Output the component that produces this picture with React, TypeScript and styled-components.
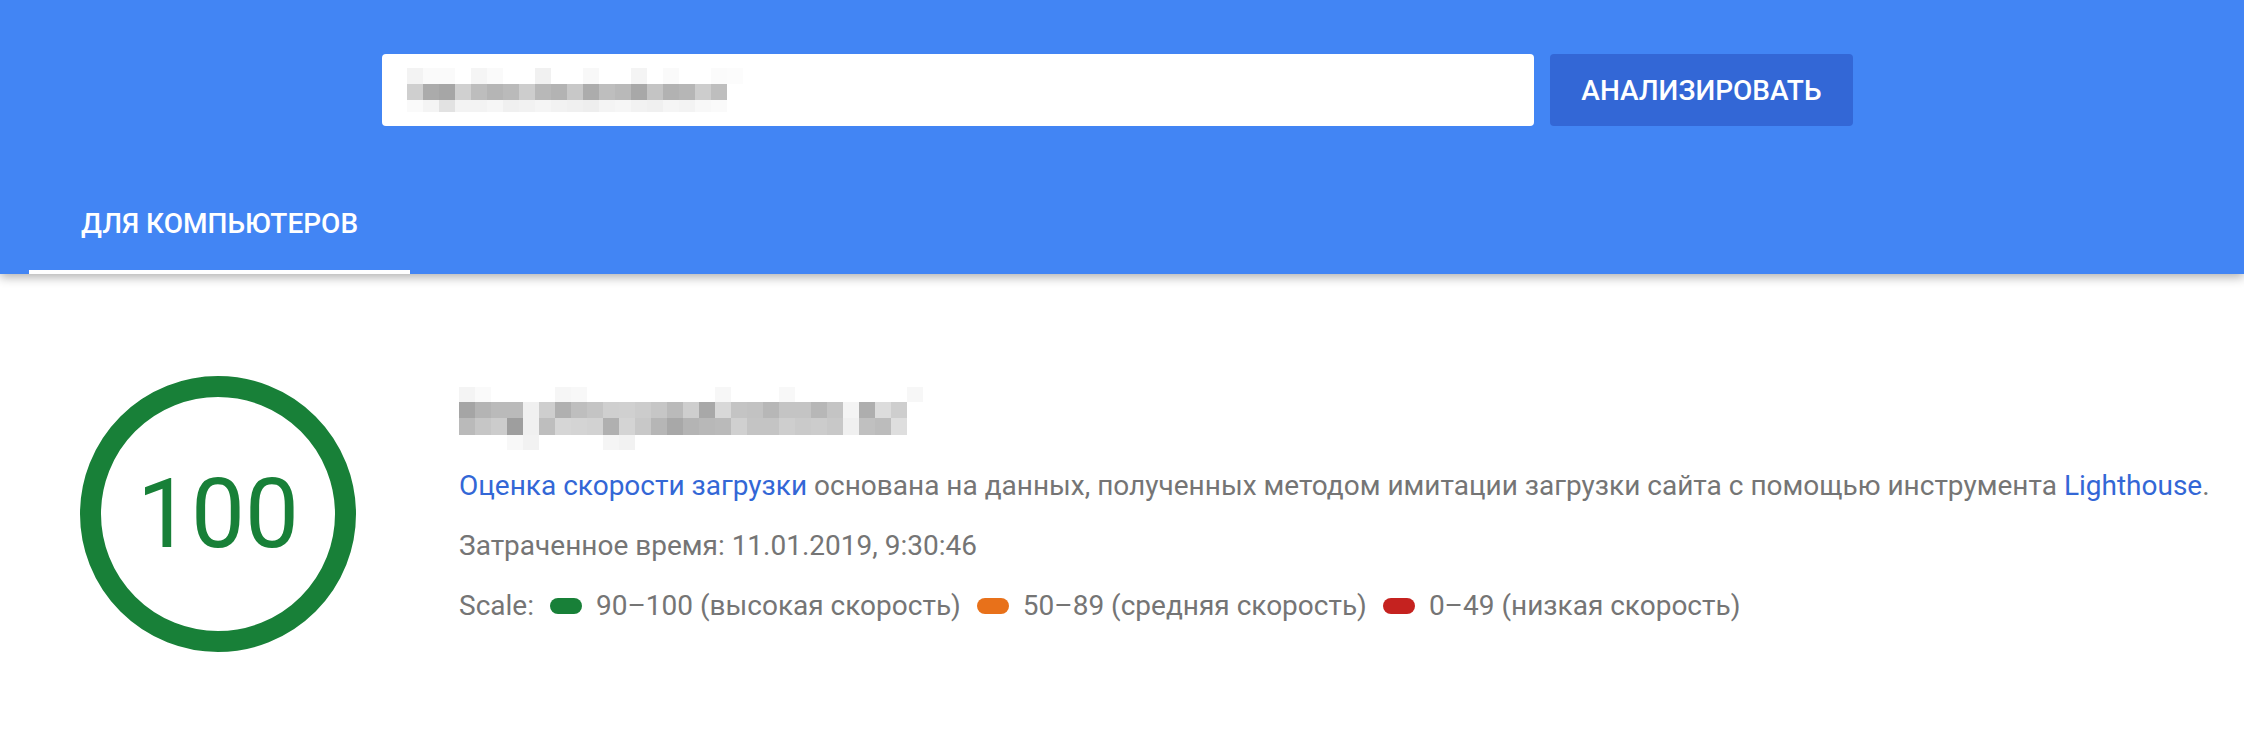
import styled, { createGlobalStyle } from "styled-components"

const GlobalStyle = createGlobalStyle`
  html, body {
    margin: 0;
    padding: 0;
    background: #fff;
  }
  body {
    font-family: Roboto, "Liberation Sans", Arial, sans-serif;
  }
`

const Header = styled.header`
  position: relative;
  z-index: 2;
  background: #4285f4;
  box-shadow: 0 3px 10px rgba(0, 0, 0, 0.32);
`

const SearchRow = styled.div`
  display: flex;
  justify-content: center;
  gap: 16px;
  padding: 54px 9px 0 0;
`

const UrlField = styled.div`
  display: flex;
  align-items: center;
  box-sizing: border-box;
  width: 1152px;
  height: 72px;
  padding-left: 25px;
  background: #fff;
  border-radius: 4px;
`

const AnalyzeBtn = styled.button`
  width: 303px;
  height: 72px;
  border: none;
  border-radius: 4px;
  background: #3367d6;
  color: #fff;
  font-family: Roboto, "Liberation Sans", Arial, sans-serif;
  font-size: 28px;
  font-weight: 500;
  cursor: pointer;
`

const Tabs = styled.nav`
  display: flex;
  padding: 50px 0 0 29px;
`

const Tab = styled.div<{ active?: boolean }>`
  display: flex;
  align-items: center;
  box-sizing: border-box;
  height: 98px;
  padding: 0 52px;
  color: #fff;
  font-size: 28px;
  font-weight: 500;
  border-bottom: 4px solid ${({ active }) => (active ? "#fff" : "transparent")};
`

const Mosaic = styled.div`
  display: flex;
  flex-direction: column;
`

const MosaicRow = styled.div<{ h: number }>`
  display: flex;
  height: ${({ h }) => h}px;
`

const MosaicCell = styled.span<{ shade: number }>`
  width: 16px;
  height: 100%;
  background: ${({ shade }) => `rgb(${shade}, ${shade}, ${shade})`};
`

const Main = styled.main`
  display: flex;
  padding: 102px 0 0 80px;
`

const Gauge = styled.div`
  position: relative;
  flex: none;
  width: 276px;
  height: 276px;
  display: flex;
  align-items: center;
  justify-content: center;

  svg {
    position: absolute;
    inset: 0;
  }
`

const Score = styled.span`
  position: relative;
  font-size: 96px;
  color: #188038;
  line-height: 1;
`

const Summary = styled.section`
  margin-left: 103px;
  padding-top: 11px;
  color: #757575;
  font-size: 28px;
`

const Line = styled.p`
  margin: 0;
  line-height: 60px;
  white-space: nowrap;
`

const FirstLine = styled(Line)`
  margin-top: 6px;
`

const Link = styled.a`
  color: #3367d6;
  text-decoration: none;
`

const ScaleLine = styled(Line)`
  display: flex;
  align-items: center;
`

const Pill = styled.span<{ color: string }>`
  display: inline-block;
  width: 32px;
  height: 16px;
  margin: 0 14px 0 16px;
  border-radius: 8px;
  background: ${({ color }) => color};
`

const inputMosaic = [
  { h: 16, cells: [243, 250, 250, 255, 245, 250, 255, 255, 241, 255, 255, 248, 255, 255, 244, 255, 250, 255, 255, 251, 252] },
  { h: 16, cells: [207, 171, 166, 208, 189, 181, 186, 205, 184, 179, 200, 172, 190, 185, 168, 196, 178, 182, 205, 190, 255] },
  { h: 12, cells: [250, 244, 226, 243, 243, 246, 240, 242, 245, 242, 240, 238, 244, 246, 242, 240, 245, 243, 248, 250, 255] },
]

const titleMosaic = [
  { h: 15, cells: [244, 250, 255, 255, 255, 255, 246, 248, 255, 255, 255, 255, 255, 255, 255, 255, 247, 255, 255, 255, 248, 255, 255, 255, 255, 255, 255, 255, 247] },
  { h: 16, cells: [165, 180, 186, 186, 240, 206, 176, 190, 196, 207, 208, 204, 198, 186, 206, 168, 216, 196, 194, 183, 196, 196, 183, 196, 244, 174, 220, 206, 255] },
  { h: 17, cells: [186, 198, 204, 158, 240, 190, 214, 212, 210, 176, 212, 200, 182, 168, 180, 184, 186, 208, 196, 196, 206, 202, 204, 200, 240, 192, 188, 222, 255] },
  { h: 15, cells: [255, 255, 255, 248, 242, 255, 255, 255, 255, 245, 242, 255, 255, 255, 255, 255, 255, 255, 255, 255, 255, 255, 255, 255, 255, 255, 255, 255, 255] },
]

function Pixelated({ rows }: { rows: { h: number; cells: number[] }[] }) {
  return (
    <Mosaic aria-hidden>
      {rows.map((row, i) => (
        <MosaicRow key={i} h={row.h}>
          {row.cells.map((shade, j) => (
            <MosaicCell key={j} shade={shade} />
          ))}
        </MosaicRow>
      ))}
    </Mosaic>
  )
}

export default function App() {
  return (
    <>
      <GlobalStyle />
      <Header>
        <SearchRow>
          <UrlField>
            <Pixelated rows={inputMosaic} />
          </UrlField>
          <AnalyzeBtn>АНАЛИЗИРОВАТЬ</AnalyzeBtn>
        </SearchRow>
        <Tabs>
          <Tab active>ДЛЯ КОМПЬЮТЕРОВ</Tab>
        </Tabs>
      </Header>
      <Main>
        <Gauge>
          <svg width="276" height="276" viewBox="0 0 276 276">
            <circle cx="138" cy="138" r="127.5" fill="none" stroke="#188038" strokeWidth="21" />
          </svg>
          <Score>100</Score>
        </Gauge>
        <Summary>
          <Pixelated rows={titleMosaic} />
          <FirstLine>
            <Link href="#">Оценка скорости загрузки</Link> основана на данных, полученных методом
            имитации загрузки сайта с помощью инструмента <Link href="#">Lighthouse</Link>.
          </FirstLine>
          <Line>Затраченное время: 11.01.2019, 9:30:46</Line>
          <ScaleLine>
            Scale:
            <Pill color="#188038" />
            90–100 (высокая скорость)
            <Pill color="#e8711a" />
            50–89 (средняя скорость)
            <Pill color="#c5221f" />
            0–49 (низкая скорость)
          </ScaleLine>
        </Summary>
      </Main>
    </>
  )
}
